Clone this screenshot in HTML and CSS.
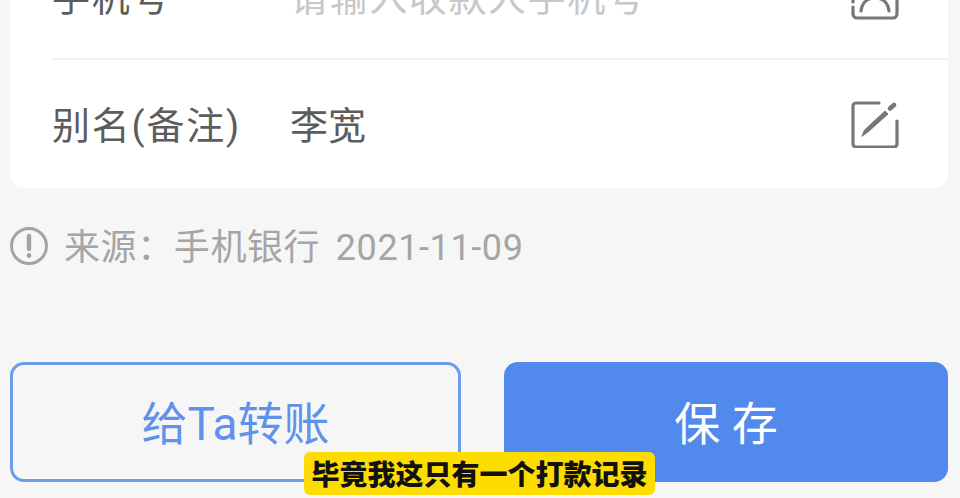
FILE: index.html
```html
<!DOCTYPE html>
<html lang="zh">
<head>
    <meta charset="utf-8">
    <title>编辑收款人</title>
    <link rel="stylesheet" href="styles.css">
</head>
<body>

<div class="screen">
    <div class="card">
        <div class="row row-phone">
            <span class="label">手机号</span>
            <span class="value placeholder">请输入收款人手机号</span>
            <svg class="icon" viewBox="0 0 48 48" fill="none" stroke="#777" stroke-width="3.2" stroke-linecap="round" stroke-linejoin="round">
                <path d="M46 2v40a4 4 0 0 1-4 4H6a4 4 0 0 1-4-4v-7"/>
                <path d="M2 2h44M2 2v20M2 28v2"/>
                <circle cx="24" cy="16" r="8"/>
                <path d="M10 39c1-8 6-13 14-13s13 5 14 13"/>
            </svg>
        </div>
        <div class="row row-alias">
            <span class="label">别名(备注)</span>
            <span class="value">李宽</span>
            <svg class="icon" viewBox="0 0 48 48" fill="none" stroke="#777" stroke-width="3.2" stroke-linecap="round" stroke-linejoin="round">
                <path d="M28 3H5a3 3 0 0 0-3 3v38a3 3 0 0 0 3 3h38a3 3 0 0 0 3-3V21"/>
                <path d="M11 36l2.500-6L34 11l3 3-20 18z" fill="#777" stroke-width="1"/>
                <path d="M39 8.500l4-3.500" stroke-width="4.600"/>
            </svg>
        </div>
    </div>

    <div class="source">
        <svg class="info" viewBox="0 0 40 40" fill="none" stroke="#a3a3a3">
            <circle cx="20" cy="20" r="17.500" stroke-width="3"/>
            <path d="M20 10v13" stroke-width="4.400" stroke-linecap="round"/>
            <circle cx="20" cy="29.500" r="2.400" fill="#a3a3a3" stroke="none"/>
        </svg>
        <span class="source-text">来源：手机银行 2021-11-09</span>
    </div>

    <div class="actions">
        <button class="btn btn-outline">给Ta转账</button>
        <button class="btn btn-primary">保 存</button>
    </div>

    <div class="caption">毕竟我这只有一个打款记录</div>
</div>

</body>
</html>
```

FILE: styles.css
```css
html, body {
    margin: 0;
    padding: 0;
}
body {
    font-family: "Noto Sans", "Noto Sans CJK SC", sans-serif;
    background-color: #f6f6f6;
    overflow: hidden;
}
.screen {
    position: relative;
    width: 960px;
    height: 498px;
    overflow: hidden;
}
.card {
    margin: -70px 12px 0 10px;
    padding-left: 42px;
    background-color: #fff;
    border-radius: 14px;
}
.row {
    display: flex;
    align-items: center;
    height: 128px;
    padding-right: 49px;
    font-family: "Roboto", "Noto Sans CJK SC", sans-serif;
    font-size: 38px;
}
.row-phone {
    border-bottom: 2px solid #f3f3f3;
}
.row-phone .icon {
    margin-top: 4px;
}
.row-alias .label,
.row-alias .value {
    margin-bottom: 4px;
}
.label {
    width: 238px;
    color: #5c5c5c;
    letter-spacing: 1.800px;
    white-space: nowrap;
}
.value {
    flex: 1;
    color: #5c5c5c;
}
.placeholder {
    color: #c8c8c8;
    letter-spacing: 1.600px;
}
.icon {
    width: 48px;
    height: 48px;
}
.source {
    display: flex;
    align-items: center;
    gap: 15px;
    margin: 38px 0 0 9px;
    height: 40px;
    color: #a5a5a5;
    font-family: "Roboto", "Noto Sans CJK SC", sans-serif;
    font-size: 36px;
    letter-spacing: 0.600px;
    word-spacing: 6px;
    white-space: nowrap;
}
.source-text {
    margin-bottom: 4px;
}
.info {
    width: 40px;
    height: 40px;
}
.actions {
    display: flex;
    gap: 43px;
    margin: 96px 12px 0 10px;
}
.btn {
    height: 120px;
    border-radius: 14px;
    font-family: "Roboto", "Noto Sans CJK SC", sans-serif;
    font-size: 46px;
    padding: 0 0 4px;
}
.btn-outline {
    width: 451px;
    background-color: #f6f6f6;
    border: 3px solid #6c9cec;
    color: #5f92ea;
}
.btn-primary {
    flex: 1;
    background-color: #5189ec;
    border: none;
    color: #fff;
}
.caption {
    position: absolute;
    left: 304px;
    top: 452px;
    width: 351px;
    height: 43px;
    line-height: 43px;
    text-align: center;
    background-color: #fddc00;
    border-radius: 6px;
    color: #111;
    font-family: "Noto Sans CJK SC", sans-serif;
    font-size: 28px;
    font-weight: 900;
}
```
